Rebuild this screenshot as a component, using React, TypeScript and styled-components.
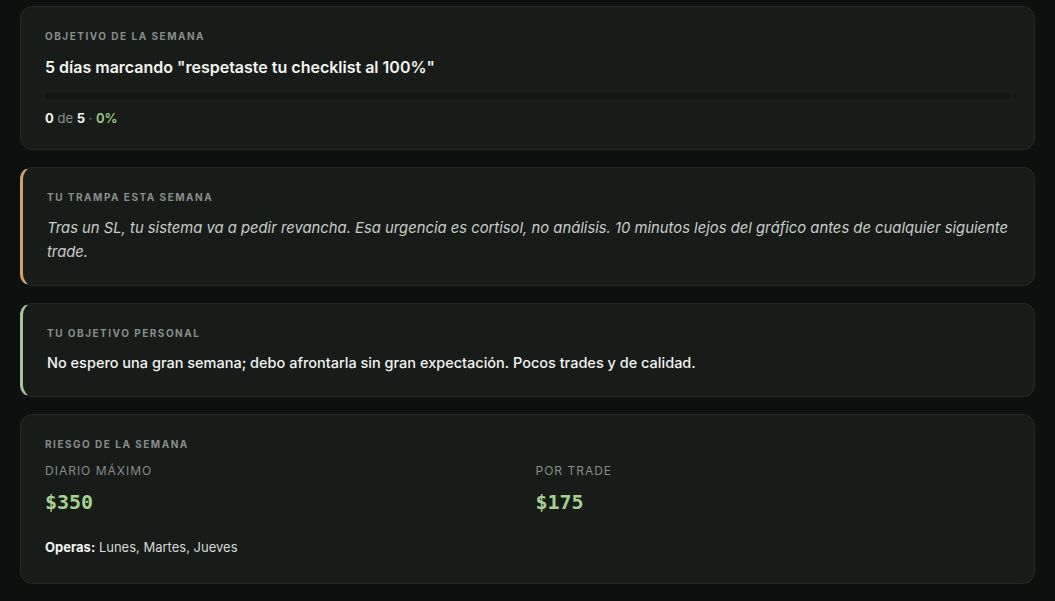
import React from "react";
import styled, { createGlobalStyle } from "styled-components";

const Global = createGlobalStyle`
  html, body { margin: 0; padding: 0; background: #0c100f; }
  body { font-family: Inter, "Noto Sans", sans-serif; color: #eef1ec; }
  * { box-sizing: border-box; }
`;

const Page = styled.div`
  display: flex;
  flex-direction: column;
  gap: 17px;
  padding: 6px 20px 18px 20px;
  width: 1055px;
`;

const Card = styled.section<{ $accent?: string }>`
  background: #171c19;
  border: 1px solid #232925;
  border-left: ${(p) => (p.$accent ? `3px solid ${p.$accent}` : "1px solid #232925")};
  border-radius: 12px;
  padding: 22px 24px 21px 24px;
  display: flex;
  flex-direction: column;
`;

const Label = styled.div`
  font-size: 10px;
  line-height: 14px;
  font-weight: 700;
  letter-spacing: 1.5px;
  text-transform: uppercase;
  color: #878e89;
`;

const Title = styled.div`
  margin-top: 12px;
  font-size: 16px;
  line-height: 24px;
  font-weight: 600;
  color: #f2f4f0;
`;

const Track = styled.div`
  margin-top: 14px;
  height: 6px;
  border-radius: 3px;
  background: #111613;
`;

const Fill = styled.div`
  height: 100%;
  border-radius: 3px;
  background: #9fcb8a;
`;

const Stats = styled.div`
  margin-top: 9px;
  font-size: 13px;
  line-height: 20px;
  color: #878e89;
`;

const Strong = styled.b`
  color: #f2f4f0;
  font-weight: 700;
`;

const Pct = styled.span`
  color: #9fcb8a;
  font-weight: 600;
`;

const Quote = styled.p`
  margin: 12px 0 0;
  font-size: 14.8px;
  line-height: 24px;
  font-style: italic;
  color: #c9cdc8;
`;

const Body = styled.p`
  margin: 11px 0 0;
  font-size: 14.5px;
  line-height: 24px;
  font-weight: 500;
  color: #f2f4f0;
`;

const RiskGrid = styled.div`
  display: grid;
  grid-template-columns: 1fr 1fr;
  column-gap: 16px;
  margin-top: 11px;
`;

const Metric = styled.div`
  display: flex;
  flex-direction: column;
`;

const MetricLabel = styled.div`
  font-size: 12px;
  line-height: 18px;
  letter-spacing: 1px;
  text-transform: uppercase;
  color: #868c87;
`;

const MetricValue = styled.div`
  margin-top: 8px;
  font-family: "DejaVu Sans Mono", "Liberation Mono", monospace;
  font-size: 20px;
  line-height: 28px;
  font-weight: 700;
  color: #a5d18f;
`;

const Days = styled.div`
  margin-top: 21px;
  font-size: 13px;
  line-height: 20px;
  color: #d6d9d4;
  padding-bottom: 5px;
`;

export default function App() {
  const done = 0;
  const total = 5;
  const pct = Math.round((done / total) * 100);
  return (
    <>
      <Global />
      <Page>
        <Card>
          <Label>Objetivo de la semana</Label>
          <Title>5 días marcando "respetaste tu checklist al 100%"</Title>
          <Track>
            <Fill style={{ width: `${pct}%` }} />
          </Track>
          <Stats>
            <Strong>{done}</Strong> de <Strong>{total}</Strong> · <Pct>{pct}%</Pct>
          </Stats>
        </Card>

        <Card $accent="#d9a066">
          <Label>Tu trampa esta semana</Label>
          <Quote>
            Tras un SL, tu sistema va a pedir revancha. Esa urgencia es cortisol, no análisis. 10 minutos lejos
            del gráfico antes de cualquier siguiente trade.
          </Quote>
        </Card>

        <Card $accent="#a8c493">
          <Label>Tu objetivo personal</Label>
          <Body>No espero una gran semana; debo afrontarla sin gran expectación. Pocos trades y de calidad.</Body>
        </Card>

        <Card>
          <Label>Riesgo de la semana</Label>
          <RiskGrid>
            <Metric>
              <MetricLabel>Diario máximo</MetricLabel>
              <MetricValue>$350</MetricValue>
            </Metric>
            <Metric>
              <MetricLabel>Por trade</MetricLabel>
              <MetricValue>$175</MetricValue>
            </Metric>
          </RiskGrid>
          <Days>
            <Strong>Operas:</Strong> Lunes, Martes, Jueves
          </Days>
        </Card>
      </Page>
    </>
  );
}
